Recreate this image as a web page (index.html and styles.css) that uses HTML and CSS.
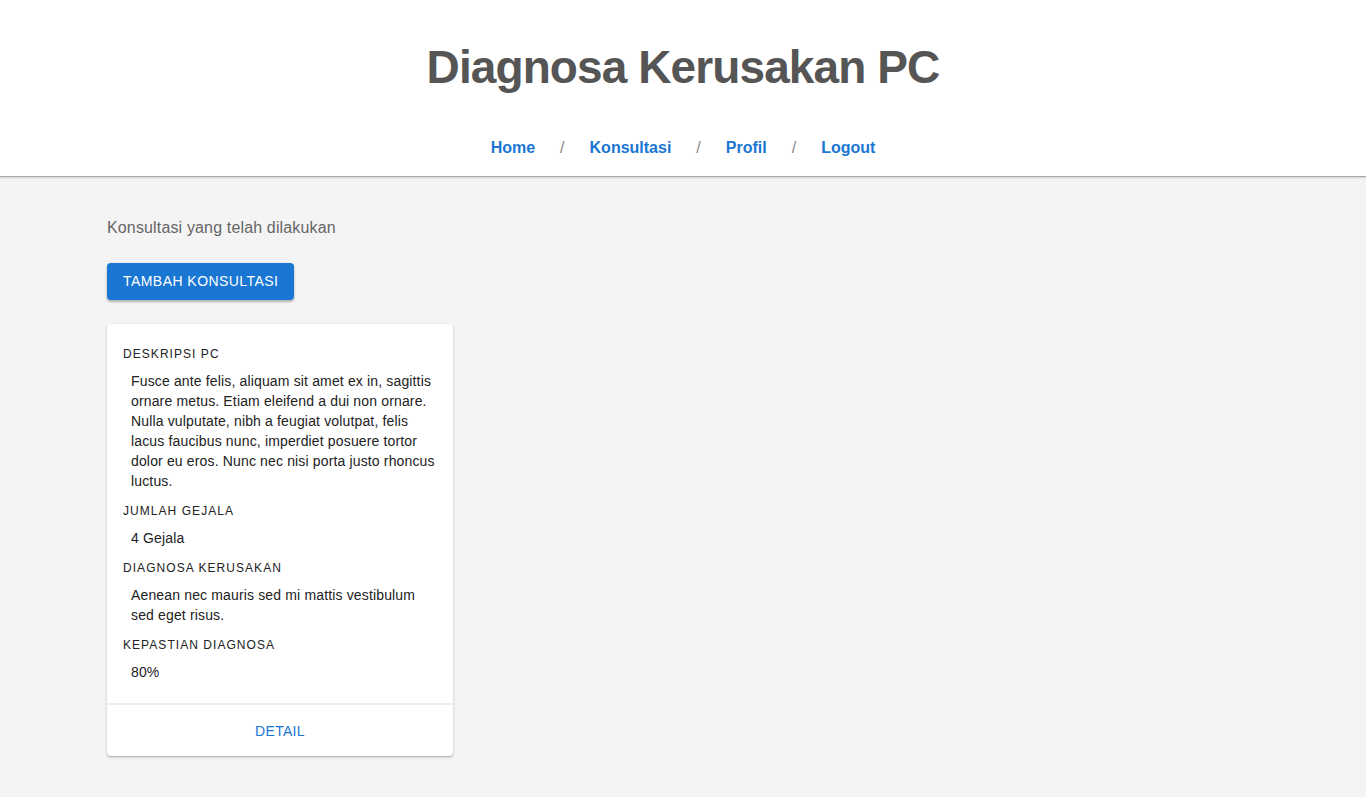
FILE: index.html
```html
<!DOCTYPE html>
<html lang="id">
<head>
<meta charset="utf-8">
<title>Diagnosa Kerusakan PC</title>
<link rel="stylesheet" href="styles.css">
</head>
<body>
<header class="header">
  <h1 class="title">Diagnosa Kerusakan PC</h1>
  <nav class="nav">
    <a class="nav-link" href="#">Home</a>
    <span class="sep">/</span>
    <a class="nav-link" href="#">Konsultasi</a>
    <span class="sep">/</span>
    <a class="nav-link" href="#">Profil</a>
    <span class="sep">/</span>
    <a class="nav-link" href="#">Logout</a>
  </nav>
</header>
<main class="main">
  <p class="intro">Konsultasi yang telah dilakukan</p>
  <button class="btn">TAMBAH KONSULTASI</button>
  <div class="card">
    <div class="card-body">
      <div class="label">DESKRIPSI PC</div>
      <div class="value">Fusce ante felis, aliquam sit amet ex in, sagittis ornare metus. Etiam eleifend a dui non ornare. Nulla vulputate, nibh a feugiat volutpat, felis lacus faucibus nunc, imperdiet posuere tortor dolor eu eros. Nunc nec nisi porta justo rhoncus luctus.</div>
      <div class="label">JUMLAH GEJALA</div>
      <div class="value">4 Gejala</div>
      <div class="label">DIAGNOSA KERUSAKAN</div>
      <div class="value">Aenean nec mauris sed mi mattis vestibulum sed eget risus.</div>
      <div class="label">KEPASTIAN DIAGNOSA</div>
      <div class="value">80%</div>
    </div>
    <div class="card-actions">
      <a class="detail" href="#">DETAIL</a>
    </div>
  </div>
</main>
</body>
</html>
```

FILE: styles.css
```css
* { box-sizing: border-box; }
html, body { margin: 0; padding: 0; }
body {
  background: #f4f4f4;
  font-family: "Liberation Sans", Arial, sans-serif;
  color: #222;
  min-height: 797px;
}
.header {
  background: #fff;
  height: 177px;
  border-bottom: 1px solid #a8a8a8;
  box-shadow: 0 1px 2px rgba(0,0,0,0.15);
  display: flex;
  flex-direction: column;
  align-items: center;
  padding-top: 37px;
}
.title {
  margin: 0;
  font-size: 46px;
  line-height: 60px;
  font-weight: bold;
  color: #555;
  letter-spacing: -0.9px;
}
.nav {
  margin-top: 41px;
  display: flex;
  font-size: 16px;
  font-weight: bold;
  line-height: 20px;
}
.nav-link {
  color: #1976d2;
  text-decoration: none;
}
.sep {
  color: #888;
  font-weight: normal;
  padding: 0 25px;
}
.main {
  padding: 41px 107px;
}
.intro {
  margin: 0;
  font-size: 16px;
  line-height: 20px;
  color: #666;
  letter-spacing: 0.15px;
}
.btn {
  margin-top: 25px;
  display: block;
  height: 37px;
  padding: 0 16px;
  background: #1976d2;
  color: #fff;
  border: none;
  border-radius: 4px;
  font-family: "Liberation Sans", Arial, sans-serif;
  font-size: 14px;
  line-height: 35px;
  letter-spacing: 0.45px;
  box-shadow: 0 2px 2px rgba(0,0,0,0.2), 0 1px 4px rgba(0,0,0,0.12);
}
.card {
  margin-top: 24px;
  width: 346px;
  background: #fff;
  border-radius: 4px;
  box-shadow: 0 1px 3px rgba(0,0,0,0.2), 0 1px 1px rgba(0,0,0,0.14);
}
.card-body {
  padding: 20px 16px 21px;
}
.label {
  font-size: 12px;
  line-height: 20px;
  letter-spacing: 1.05px;
  color: #222;
  margin-bottom: 7px;
}
.value {
  font-size: 14px;
  line-height: 20px;
  padding-left: 8px;
  color: #222;
  margin-bottom: 10px;
  letter-spacing: 0.15px;
}
.value:last-child { margin-bottom: 0; }
.card-actions {
  border-top: 2px solid #eee;
  height: 53px;
  display: flex;
  align-items: center;
  justify-content: center;
}
.detail {
  color: #1976d2;
  text-decoration: none;
  font-size: 14px;
  letter-spacing: 0.3px;
}
```
